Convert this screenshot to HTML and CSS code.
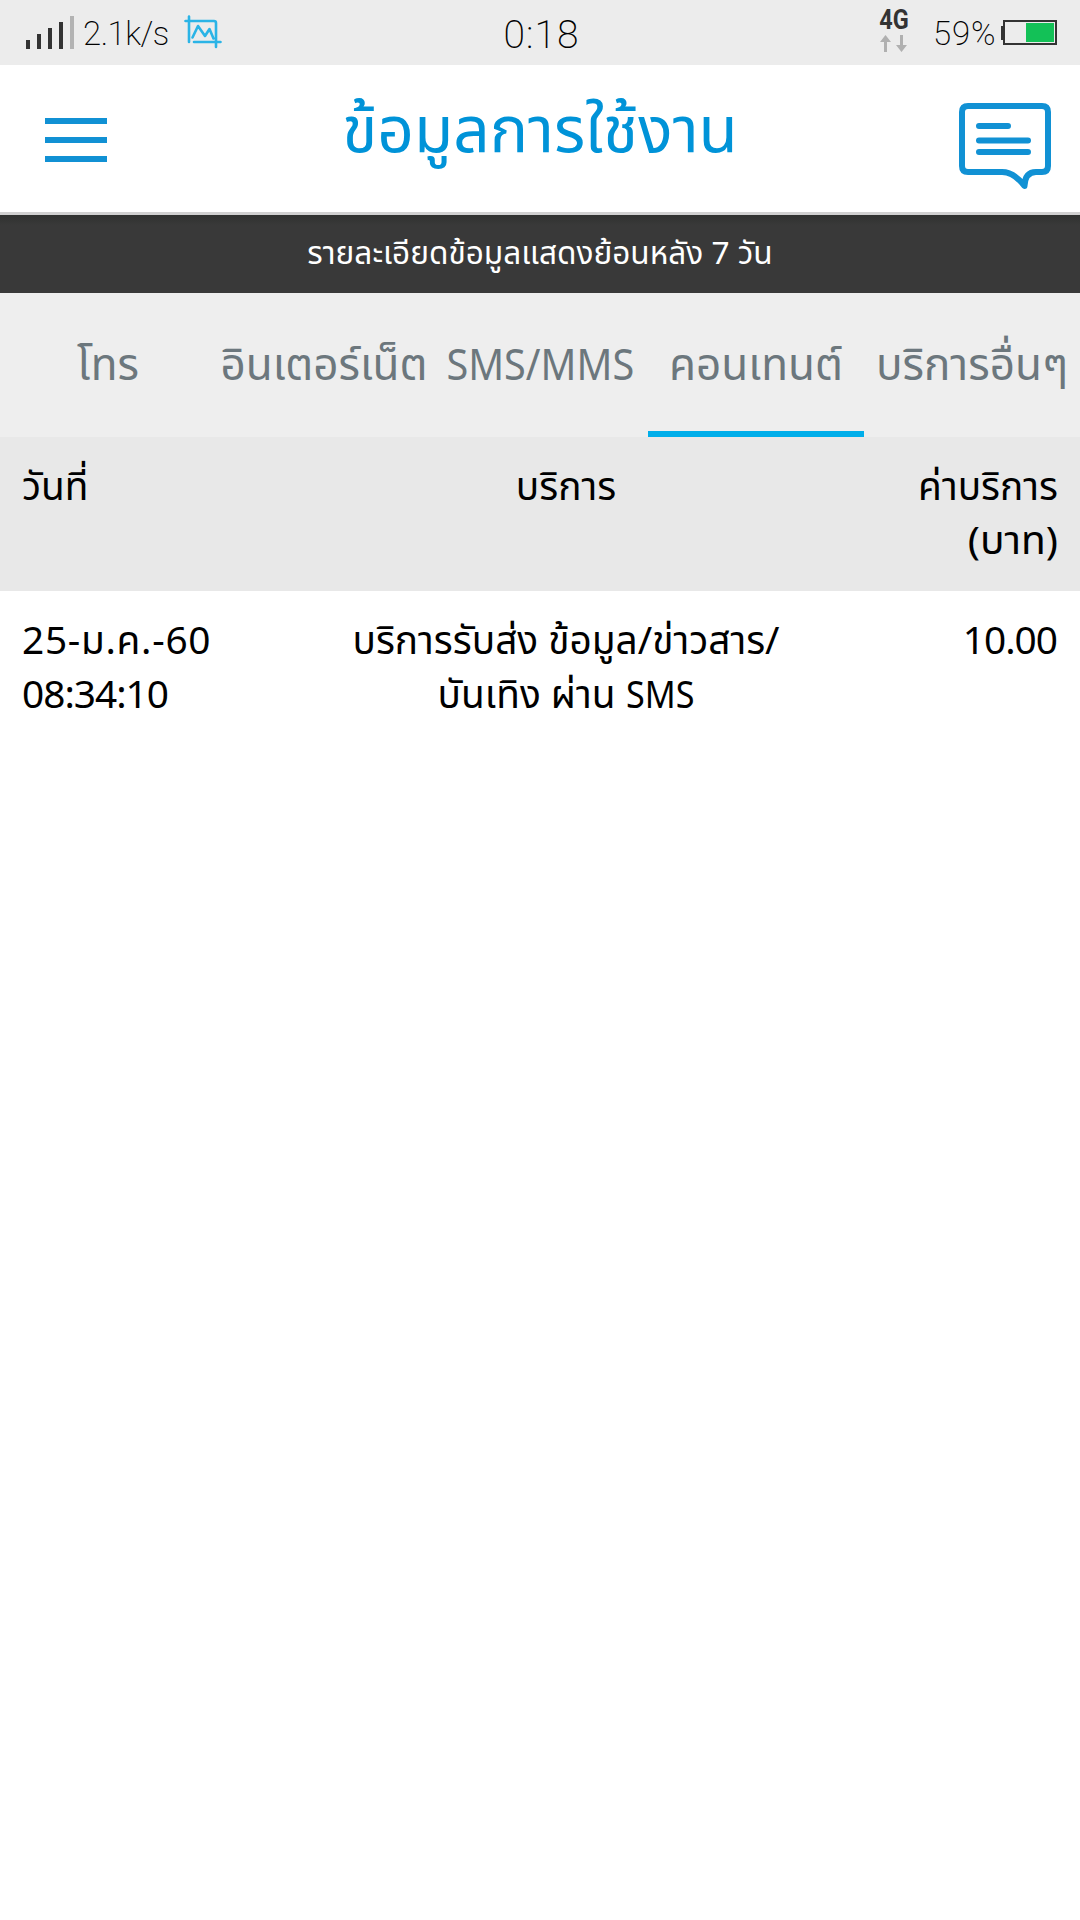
FILE: index.html
```html
<!DOCTYPE html>
<html lang="th">
<head>
    <meta charset="UTF-8">
    <meta name="viewport" content="width=device-width, initial-scale=1.0">
    <title>ข้อมูลการใช้งาน</title>
    <link rel="stylesheet" href="styles.css">
</head>
<body>

    <div class="status-bar">
        <div class="status-left">
            <svg class="signal" width="48" height="33" viewBox="0 0 48 33">
                <path d="M0 24h4v9h-4zM11 18h4v15h-4zM22 12h4v21h-4zM33 6h4v27h-4z" fill="#333"/>
                <path d="M44 0h4v33h-4z" fill="#b3b3b3"/>
            </svg>
            <span class="speed">2.1k/s</span>
            <svg class="crop-icon" width="38" height="34" viewBox="0 0 38 34" fill="none" stroke="#2bb4e6" stroke-width="2.6" stroke-linecap="round" stroke-linejoin="round">
                <path d="M1.500 6H30q2 0 2 2V32M5 1.500V27M10 27H36.500M8.500 22.500L14 11L21 21L25.500 14L29.500 23.500"/>
            </svg>
        </div>
        <div class="clock">0:18</div>
        <div class="status-right">
            <div class="network">
                <span class="network-type">4G</span>
                <svg width="28" height="17" viewBox="0 0 28 17" fill="#b0b0b0">
                    <path d="M5.500 0L11 7H7V17H4V7H0zM20 0h3v10h4l-5.500 7L16 10h4z"/>
                </svg>
            </div>
            <span class="percent">59%</span>
            <svg class="battery" width="56" height="25" viewBox="0 0 56 25">
                <path d="M0 6h3v14H0z" fill="#333"/>
                <rect x="3" y="1" width="52" height="23" fill="none" stroke="#333" stroke-width="2"/>
                <path d="M25 3h28v19H25z" fill="#13c157"/>
            </svg>
        </div>
    </div>

    <div class="title-bar">
        <svg class="menu-icon" width="63" height="46" viewBox="0 0 63 46" fill="#1191d4">
            <path d="M0 1h62v6H0zM0 20h62v6H0zM0 39h62v6H0z"/>
        </svg>
        <h1>ข้อมูลการใช้งาน</h1>
        <svg class="chat-icon" width="92" height="88" viewBox="0 0 92 88" fill="none" stroke="#1191d4" stroke-width="6" stroke-linecap="round" stroke-linejoin="round">
            <path d="M9 4H83Q89 4 89 10V64Q89 70 83 70H77Q66 70 65.500 84Q55 70 43 70H9Q3 70 3 64V10Q3 4 9 4z"/>
            <path d="M20 24H49M20 38.500H69M20 50H69"/>
        </svg>
    </div>

    <div class="notice">รายละเอียดข้อมูลแสดงย้อนหลัง 7 วัน</div>

    <div class="tabs">
        <div class="tab">โทร</div>
        <div class="tab">อินเตอร์เน็ต</div>
        <div class="tab"><span class="tab-sms">SMS/MMS</span></div>
        <div class="tab active">คอนเทนต์</div>
        <div class="tab">บริการอื่นๆ</div>
    </div>

    <div class="row head">
        <div class="col-date">วันที่</div>
        <div class="col-service">บริการ</div>
        <div class="col-price">ค่าบริการ<br><span class="unit">(บาท)</span></div>
    </div>

    <div class="row">
        <div class="col-date"><span class="date">25-ม.ค.-60</span><br><span class="time">08:34:10</span></div>
        <div class="col-service">บริการรับส่ง ข้อมูล/ข่าวสาร/<br>บันเทิง ผ่าน <span class="latin">SMS</span></div>
        <div class="col-price"><span class="amount">10.00</span></div>
    </div>

</body>
</html>
```
FILE: styles.css
```css
* {
    box-sizing: border-box;
}
body {
    margin: 0;
    height: 1920px;
    overflow: hidden;
    background: #fff;
    color: #000;
    font-family: "Noto Sans Thai", "Noto Sans", sans-serif;
}
svg {
    display: block;
    flex: none;
}

/* status bar */
.status-bar {
    display: grid;
    grid-template-columns: 1fr auto 1fr;
    height: 65px;
    padding: 0 23px 0 26px;
    background: #ececec;
    font-family: Roboto, sans-serif;
    font-weight: 200;
}
.status-left, .status-right {
    display: flex;
    align-items: flex-start;
}
.status-right {
    justify-content: flex-end;
}
.signal {
    margin-top: 16px;
}
.speed {
    width: 87px;
    margin: 14px 0 0 9px;
    font-size: 33px;
    line-height: 40px;
    letter-spacing: -0.5px;
}
.crop-icon {
    margin: 15px 0 0 14px;
}
.clock {
    padding-top: 10px;
    font-size: 39px;
    line-height: 50px;
    letter-spacing: 1px;
}
.network {
    display: flex;
    flex-direction: column;
    align-items: center;
    width: 28px;
    margin: 8px 25px 0 0;
}
.network-type {
    height: 27px;
    font: bold 27px/24px Roboto, sans-serif;
    color: #333;
    transform: scaleX(0.87);
}
.percent {
    width: 65px;
    margin: 14px 3px 0 0;
    font-size: 33px;
    line-height: 40px;
    letter-spacing: 0.8px;
}
.battery {
    margin-top: 20px;
}

/* title */
.title-bar {
    display: flex;
    justify-content: space-between;
    height: 150px;
    padding: 0 29px 0 45px;
    border-bottom: 3px solid #d0d0d0;
}
.menu-icon {
    margin-top: 52px;
}
.title-bar h1 {
    margin: 0;
    padding-left: 13px;
    font-size: 64px;
    line-height: 136px;
    font-weight: normal;
    color: #0093d8;
}
.chat-icon {
    margin-top: 37px;
}
.notice {
    height: 78px;
    background: linear-gradient(#2f312f, #393939 10px);
    color: #fff;
    font-size: 31.6px;
    line-height: 79px;
    text-align: center;
}

/* tabs */
.tabs {
    display: grid;
    grid-template-columns: repeat(5, 216px);
    height: 144px;
    background: #eee;
    color: #6c777d;
    font-size: 44px;
    line-height: 147px;
    text-align: center;
    white-space: nowrap;
}
.tab {
    height: 144px;
}
.tab.active {
    border-bottom: 6px solid #00aeea;
}
.tab-sms {
    display: inline-block;
    transform: scaleX(0.9);
}

/* table */
.row {
    display: grid;
    grid-template-columns: 260px 1fr 208px;
    height: 154px;
    padding: 24px 22px 0;
    font-size: 38.8px;
    line-height: 54px;
    white-space: nowrap;
}
.row.head {
    background: #e8e8e8;
}
.col-service {
    text-align: center;
}
.col-price {
    text-align: right;
}
.date {
    letter-spacing: 0.7px;
}
.time, .amount {
    letter-spacing: -1px;
}
.amount {
    margin-right: 1px;
}
.unit {
    display: inline-block;
    transform: scaleX(1.05);
    transform-origin: right;
}
.latin {
    display: inline-block;
    margin-right: -9px;
    transform: scaleX(0.88);
    transform-origin: left;
}
```
